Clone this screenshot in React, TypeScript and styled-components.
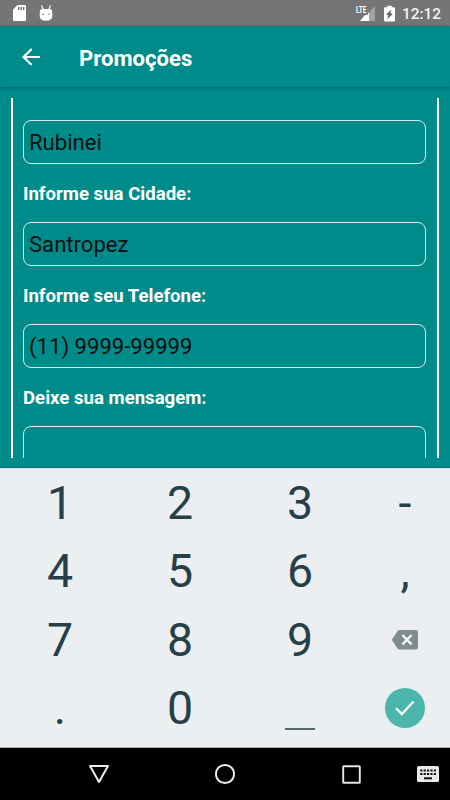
import React from "react";
import styled, { createGlobalStyle } from "styled-components";

const GlobalStyle = createGlobalStyle`
  * { box-sizing: border-box; }
  body { margin: 0; background: #008b8b; font-family: Roboto, "Liberation Sans", sans-serif; }
`;

const Screen = styled.div`
  width: 450px;
  height: 800px;
  display: flex;
  flex-direction: column;
  overflow: hidden;
  background: #008b8b;
`;

const StatusBar = styled.header`
  height: 26px;
  flex: none;
  display: flex;
  align-items: center;
  padding: 0 9px 0 13px;
  background: #757575;
  color: #fff;
`;

const Icon = styled.svg<{ $gap?: number }>`
  display: block;
  flex: none;
  margin-left: ${(p) => p.$gap ?? 0}px;
`;

const Spacer = styled.div`
  flex: 1;
`;

const Clock = styled.span`
  margin-left: 7px;
  font-size: 15.4px;
  font-weight: 500;
  line-height: 26px;
  padding-top: 2px;
  color: #f4f4f4;
`;

const AppBar = styled.nav`
  height: 61px;
  flex: none;
  display: flex;
  align-items: center;
  padding-left: 21px;
  background: #008b8b;
  box-shadow: 0 1px 4px rgba(0, 0, 0, 0.3);
  z-index: 1;
`;

const Title = styled.h1`
  margin: 3px 0 0 39px;
  font-size: 22.1px;
  font-weight: 700;
  line-height: 30px;
  color: #fff;
`;

const FormViewport = styled.main`
  height: 360px;
  flex: none;
  margin: 11px 11px 10px;
  padding: 22px 12px 0 10px;
  border-left: 2px solid #fff;
  border-right: 2px solid #f4fafa;
  overflow: hidden;
`;

const Field = styled.input`
  display: block;
  width: 403px;
  height: 44px;
  padding: 0 5px;
  border: 1.5px solid #d9eeee;
  border-radius: 8px;
  background: transparent;
  font: 400 22.1px Roboto, "Liberation Sans", sans-serif;
  color: #001010;
  outline: none;
`;

const Label = styled.label`
  display: block;
  height: 58px;
  line-height: 60px;
  font-size: 18.6px;
  font-weight: 700;
  color: #fff;
`;

const Keyboard = styled.section`
  height: 280px;
  flex: none;
  display: grid;
  grid-template-columns: 120px 120px 120px 90px;
  grid-template-rows: repeat(4, 68.5px);
  border-top: 1px solid #dce4e6;
  border-bottom: 1px solid #a9adaf;
  background: #eceff1;
  box-shadow: 0 -1px 2px rgba(0, 0, 0, 0.2);
`;

const Key = styled.button`
  display: flex;
  align-items: center;
  justify-content: center;
  padding: 0 0 1px;
  border: 0;
  background: none;
  font: 400 46.5px/68px Roboto, "Liberation Sans", sans-serif;
  color: #263f49;
`;

const SpaceMark = styled.span`
  width: 30px;
  height: 2px;
  margin-top: 42px;
  background: #54676d;
`;

const Confirm = styled.span`
  width: 40px;
  height: 40px;
  display: flex;
  align-items: center;
  justify-content: center;
  border-radius: 50%;
  background: #4db6ac;
`;

const NavBar = styled.footer`
  height: 52px;
  flex: none;
  display: flex;
  align-items: center;
  padding-left: 87px;
  background: #000;
`;

const fields = [
  { value: "Rubinei", next: "Informe sua Cidade:" },
  { value: "Santropez", next: "Informe seu Telefone:" },
  { value: "(11) 9999-99999", next: "Deixe sua mensagem:" },
];

const Backspace = () => (
  <Icon width="28" height="22" viewBox="0 0 28 22">
    <path d="M8.500 1H25q2 0 2 2v15.500q0 2-2 2H8.500q-1.200 0-2-1.100L.8 10.800 6.500 2.100Q7.300 1 8.500 1z" fill="#7f8c90" />
    <path d="M11.400 6l9.200 9.400M20.600 6l-9.200 9.400" stroke="#f3f6f7" strokeWidth="2.400" />
  </Icon>
);

const keys: React.ReactNode[] = [
  "1", "2", "3", "-",
  "4", "5", "6", ",",
  "7", "8", "9", <Backspace />,
  ".", "0", <SpaceMark />,
  <Confirm>
    <Icon width="22" height="18" viewBox="0 0 22 18">
      <path d="M2 9.200l5.800 5.900L19.600 2.600" fill="none" stroke="#fff" strokeWidth="2.200" />
    </Icon>
  </Confirm>,
];

export default function App() {
  return (
    <>
      <GlobalStyle />
      <Screen>
        <StatusBar>
          <Icon width="13" height="16" viewBox="0 0 13 16">
            <path d="M4.500 0H12q1 0 1 1v14q0 1-1 1H1q-1 0-1-1V4.500z" fill="#fff" />
            <path d="M5.700 2v3M8.200 2v3M10.700 2v3" stroke="#666" strokeWidth="1.300" />
          </Icon>
          <Icon $gap={13} width="14" height="17" viewBox="0 0 14 17">
            <path d="M2.500.5l1.800 4M11.500.5l-1.800 4" stroke="#fff" strokeWidth="1.200" />
            <path d="M1 5.500Q1.200 4 3 4h8q1.800 0 2 1.500l.4 4.500Q13.500 15.800 7 15.800T.600 10z" fill="#fff" />
            <circle cx="4" cy="9.300" r=".8" fill="#777" />
            <circle cx="10" cy="9.300" r=".8" fill="#777" />
          </Icon>
          <Spacer />
          <Icon width="20" height="17" viewBox="0 0 20 17">
            <path d="M19 1v15H4z" fill="#a3a3a3" />
            <path d="M0 0h12v9H0z" fill="#757575" />
            <path d="M13 8v8H4l5-6h3V8z" fill="#fff" />
            <text x="0" y="8.200" textLength="10.500" lengthAdjust="spacingAndGlyphs" fontSize="9.800" fontWeight="700" fill="#fff">LTE</text>
          </Icon>
          <Icon $gap={8} width="11" height="17" viewBox="0 0 11 17">
            <path d="M3.300.7h4.400v1.500H10q1 0 1 1V15.500q0 1-1 1H1q-1 0-1-1V3.200q0-1 1-1h2.300z" fill="#fff" />
            <path d="M7.400 4.300L2.100 9.500l2.300.9-1.300 4L8.800 9l-2.500-.9z" fill="#686868" />
          </Icon>
          <Clock>12:12</Clock>
        </StatusBar>

        <AppBar>
          <Icon width="19" height="20" viewBox="0 0 19 20">
            <path d="M19 10H2.500M10.700 2L2.500 10l8.200 8" fill="none" stroke="#fff" strokeWidth="2.200" />
          </Icon>
          <Title>Promoções</Title>
        </AppBar>

        <FormViewport>
          {fields.map((f) => (
            <React.Fragment key={f.value}>
              <Field aria-label={f.value} defaultValue={f.value} />
              <Label>{f.next}</Label>
            </React.Fragment>
          ))}
          <Field aria-label="Mensagem" />
        </FormViewport>

        <Keyboard>
          {keys.map((k, i) => (
            <Key key={i} type="button">{k}</Key>
          ))}
        </Keyboard>

        <NavBar>
          <Icon $gap={1} width="22" height="20" viewBox="0 0 22 20">
            <path d="M2 2h18L11 18z" fill="none" stroke="#eee" strokeWidth="2" strokeLinejoin="round" />
          </Icon>
          <Icon $gap={104} width="22" height="22" viewBox="0 0 22 22">
            <circle cx="11" cy="11" r="9.100" fill="none" stroke="#eee" strokeWidth="2" />
          </Icon>
          <Icon $gap={106} width="19" height="19" viewBox="0 0 19 19">
            <rect x="1.200" y="1.200" width="16.600" height="16.600" rx=".6" fill="none" stroke="#e6e6e6" strokeWidth="1.900" />
          </Icon>
          <Icon $gap={56} width="22" height="16" viewBox="0 0 22 16">
            <rect width="22" height="16" rx="1.500" fill="#e8e8e8" />
            <path d="M3.200 4.500h16M3.200 8h16" stroke="#111" strokeWidth="2" strokeDasharray="2.200 1.200" />
            <path d="M7 12.300h8" stroke="#111" strokeWidth="2" />
          </Icon>
        </NavBar>
      </Screen>
    </>
  );
}
